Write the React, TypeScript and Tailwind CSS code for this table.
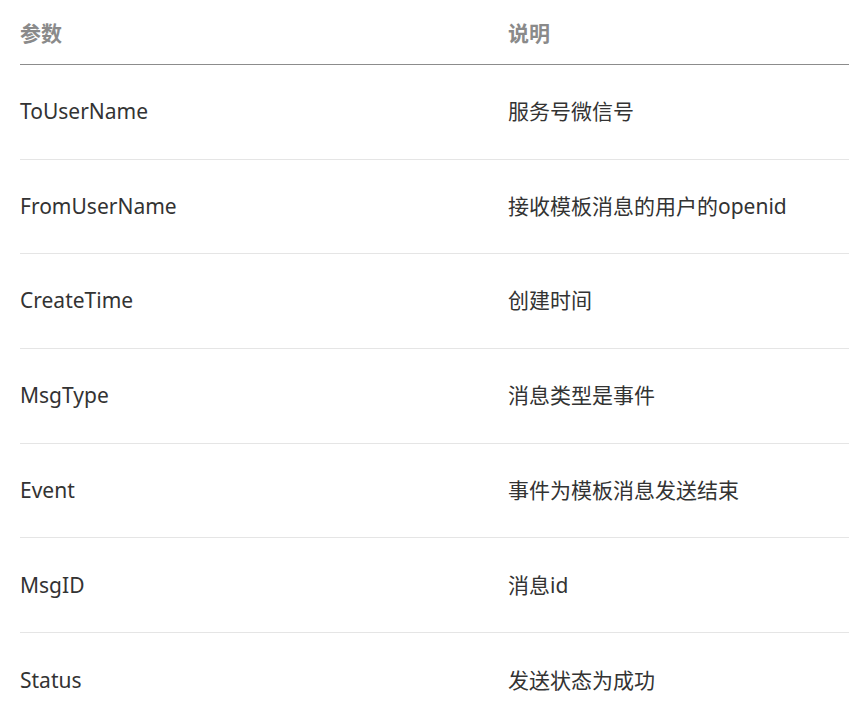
import React from "react";

const rows: [string, string][] = [
  ["ToUserName", "服务号微信号"],
  ["FromUserName", "接收模板消息的用户的openid"],
  ["CreateTime", "创建时间"],
  ["MsgType", "消息类型是事件"],
  ["Event", "事件为模板消息发送结束"],
  ["MsgID", "消息id"],
  ["Status", "发送状态为成功"],
];

export default function App() {
  return (
    <div
      className="w-[849px] h-[705px] overflow-hidden bg-white pl-5"
      style={{ fontFamily: '"Noto Sans", "Noto Sans CJK SC", sans-serif' }}
    >
      <div className="w-[850px]">
        <div className="flex h-[65px] items-center border-b border-[#8c8c8c] pt-[3px] text-[21px] font-bold text-[#8a8a8a]">
          <div className="w-[488px]">参数</div>
          <div>说明</div>
        </div>
        {rows.map(([a, b], i) => (
          <div
            key={a}
            className={`flex h-[94.7px] items-center text-[21px] text-[#333333] ${
              i < rows.length - 1 ? "border-b border-[#e5e5e5]" : ""
            }`}
          >
            <div className="w-[488px]">{a}</div>
            <div>{b}</div>
          </div>
        ))}
      </div>
    </div>
  );
}
